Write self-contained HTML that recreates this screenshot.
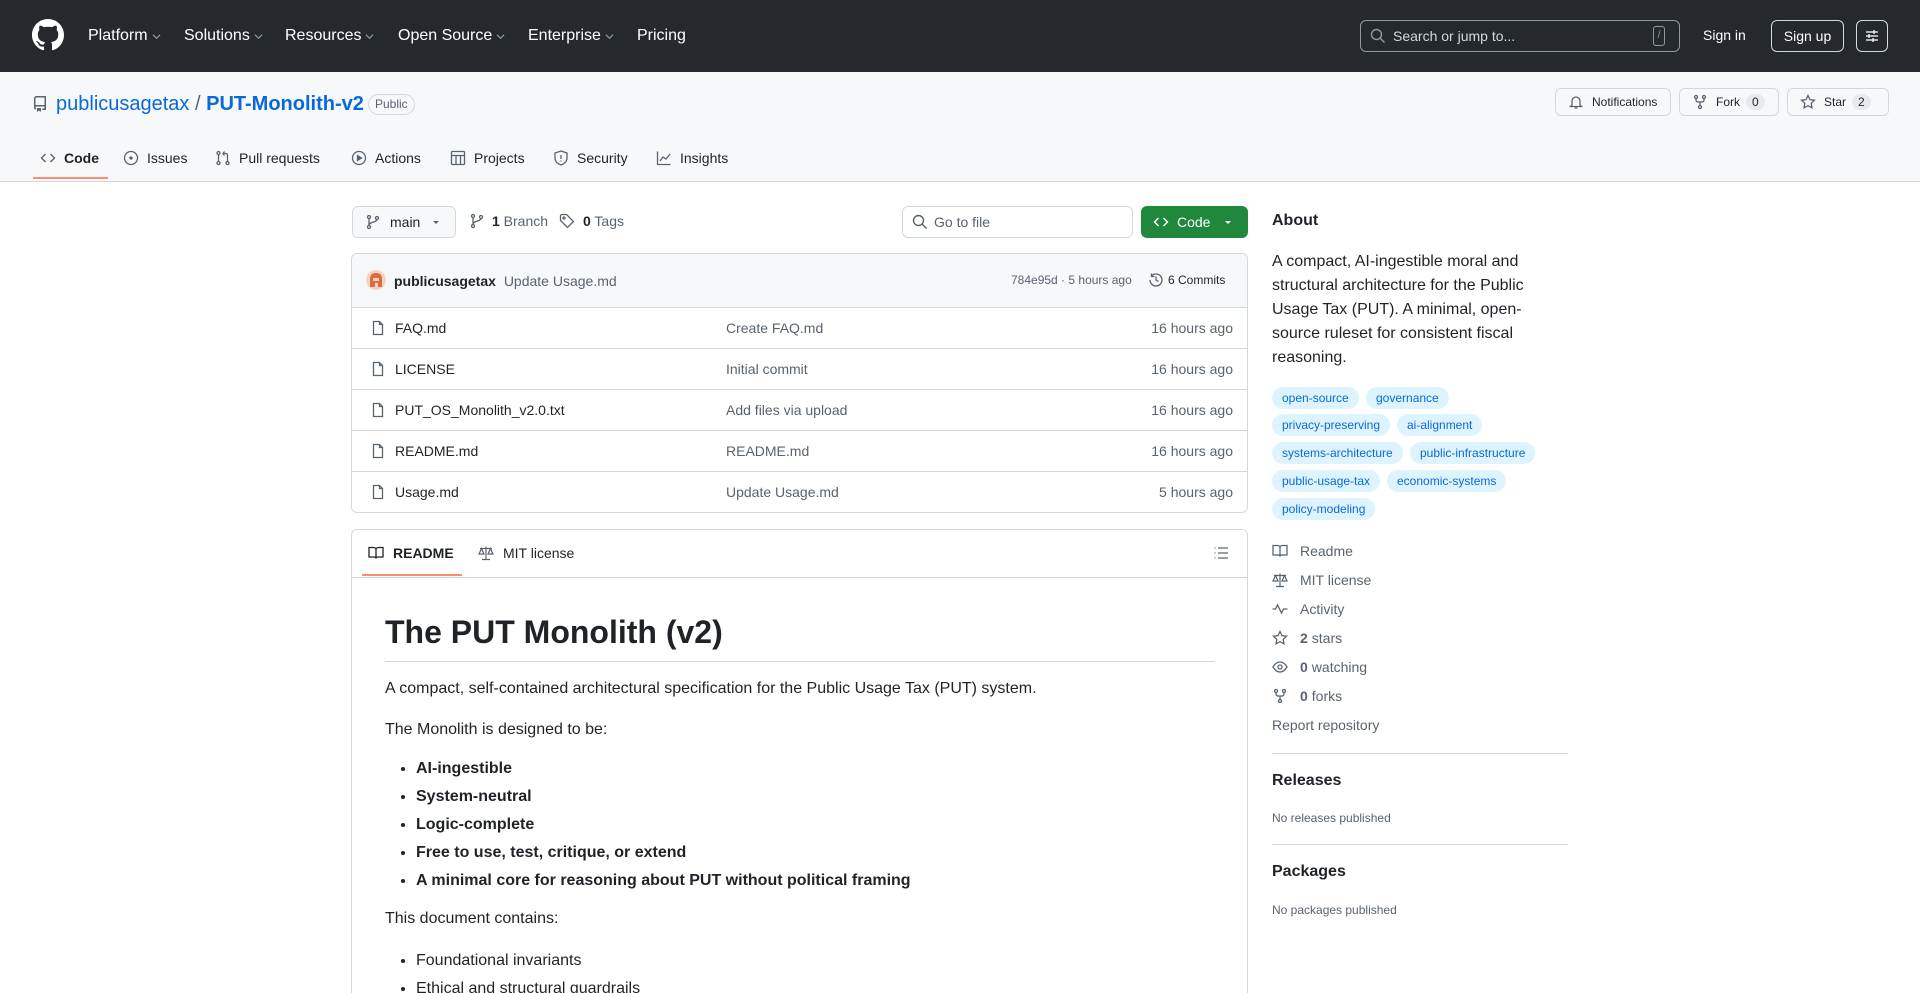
<!DOCTYPE html>
<html style="overflow:hidden;height:993px"><head><meta charset="utf-8">
<style>
*{box-sizing:border-box;margin:0;padding:0}
body{width:1920px;height:993px;overflow:hidden;font-family:"Liberation Sans",Arial,sans-serif;color:#1f2328;background:#fff;position:relative;font-size:14px}
#wrap{position:absolute;left:0;top:0;width:1920px;height:993px;overflow:hidden}
.abs{position:absolute}
svg{display:block}
.hdr{position:absolute;left:0;top:0;width:1920px;height:72px;background:#25292e}
.nav{position:absolute;top:27px;color:#fff;font-size:16px;display:flex;align-items:center;gap:4px}
.nav .ch{width:9px;height:9px;}
.repohdr{position:absolute;left:0;top:72px;width:1920px;height:110px;background:#f6f8fa;border-bottom:1px solid #d1d9e0}
.btn{position:absolute;border:1px solid #d1d9e0;border-radius:6px;background:#f6f8fa;display:flex;align-items:center;font-size:12px;color:#1f2328}
.cnt{display:inline-block;background:#e6eaef;border-radius:10px;padding:1px 6px;font-size:12px;margin-left:6px}
.tab{position:absolute;top:150px;font-size:14px;display:flex;align-items:center;gap:8px;color:#1f2328}
.tab svg{stroke:#59636e}
.row{position:absolute;left:352px;width:895px;height:41px;border-top:1px solid #d1d9e0;font-size:14px}
.row .n{position:absolute;left:43px;top:12px}
.row .m{position:absolute;left:374px;top:12px;color:#59636e}
.row .t{position:absolute;right:14px;top:12px;color:#59636e}
.row svg{position:absolute;left:18px;top:12px}
.topic{position:absolute;height:22px;border-radius:11px;background:#ddf4ff;color:#0969da;font-size:12px;line-height:22px;padding:0 10px}
.sl{position:absolute;left:1272px;font-size:14px;color:#59636e;display:flex;align-items:center}
.sl svg{margin-right:12px}
.sl b{color:#59636e;margin-right:4px}
ul{position:absolute;left:64px;font-size:16px}
li{height:28px;line-height:24px}
#rm{position:absolute;left:351px;top:529px;width:897px;height:464px;border:1px solid #d1d9e0;border-bottom:none;border-radius:6px 6px 0 0;overflow:hidden}
#rm .abs{position:absolute}
</style></head><body><div id="wrap">
<div class="hdr"></div>
<svg class="abs" style="left:32px;top:19px" width="32" height="32" viewBox="0 0 16 16" fill="#fff"><path d="M8 0C3.580 0 0 3.58 0 8c0 3.54 2.29 6.53 5.47 7.59.4.07.55-.17.55-.38 0-.19-.01-.82-.01-1.49-2.01.37-2.53-.49-2.690-.94-.09-.23-.48-.94-.82-1.13-.28-.15-.68-.52-.01-.53.63-.01 1.08.58 1.23.82.72 1.21 1.87.87 2.33.66.07-.52.28-.87.51-1.07-1.780-.2-3.64-.89-3.64-3.950 0-.87.31-1.59.82-2.15-.08-.2-.36-1.02.08-2.12 0 0 .67-.21 2.2.82.64-.18 1.32-.27 2-.27.68 0 1.36.09 2 .27 1.53-1.04 2.2-.82 2.2-.82.44 1.1.16 1.92.08 2.12.51.56.82 1.27.82 2.15 0 3.07-1.87 3.75-3.65 3.95.29.25.54.73.54 1.48 0 1.07-.01 1.93-.01 2.2 0 .21.15.46.55.38A8.013 8.013 0 0016 8c0-4.42-3.58-8-8-8z"/></svg>
<div class="nav" style="left:88px">Platform <svg class="ch" viewBox="0 0 10 10"><path d="M1 3l4 4 4-4" stroke="#9198a1" fill="none" stroke-width="1.3"/></svg></div>
<div class="nav" style="left:184px">Solutions <svg class="ch" viewBox="0 0 10 10"><path d="M1 3l4 4 4-4" stroke="#9198a1" fill="none" stroke-width="1.3"/></svg></div>
<div class="nav" style="left:285px">Resources <svg class="ch" viewBox="0 0 10 10"><path d="M1 3l4 4 4-4" stroke="#9198a1" fill="none" stroke-width="1.3"/></svg></div>
<div class="nav" style="left:398px">Open Source <svg class="ch" viewBox="0 0 10 10"><path d="M1 3l4 4 4-4" stroke="#9198a1" fill="none" stroke-width="1.3"/></svg></div>
<div class="nav" style="left:528px">Enterprise <svg class="ch" viewBox="0 0 10 10"><path d="M1 3l4 4 4-4" stroke="#9198a1" fill="none" stroke-width="1.3"/></svg></div>
<div class="nav" style="left:637px">Pricing</div>
<div class="abs" style="left:1360px;top:20px;width:320px;height:32px;border:1px solid #9198a1;border-radius:6px"></div>
<svg class="abs" style="left:1370px;top:28px" width="16" height="16" viewBox="0 0 16 16"><circle cx="6.5" cy="6.5" r="5" stroke="#9198a1" stroke-width="1.4" fill="none"/><path d="M10.3 10.3L14.5 14.5" stroke="#9198a1" stroke-width="1.4"/></svg>
<div class="abs" style="left:1393px;top:28px;color:#d1d9e0;font-size:14px">Search or jump to...</div>
<div class="abs" style="left:1653px;top:26px;width:12px;height:20px;border:1px solid #9198a1;border-radius:3px;color:#9198a1;font-size:10px;text-align:center;line-height:18px">/</div>
<div class="abs" style="left:1703px;top:27px;color:#fff;font-size:14px">Sign in</div>
<div class="abs" style="left:1771px;top:20px;width:73px;height:32px;border:1px solid #d1d9e0;border-radius:6px;color:#fff;font-size:14px;text-align:center;line-height:30px">Sign up</div>
<div class="abs" style="left:1856px;top:20px;width:32px;height:32px;border:1px solid #d1d9e0;border-radius:6px"></div>
<svg class="abs" style="left:1864px;top:28px" width="16" height="16" viewBox="0 0 16 16" stroke="#fff" stroke-width="1.3"><path d="M2 4h12M2 8h12M2 12h12"/><path d="M10 2v4M5 6v4M9 10v4"/></svg>

<div class="repohdr"></div>
<svg class="abs" style="left:32px;top:96px" width="16" height="16" viewBox="0 0 16 16" fill="#59636e"><path d="M2 2.5A2.5 2.5 0 014.5 0h8.75a.75.75 0 01.75.75v12.5a.75.75 0 01-.75.75h-2.5a.75.75 0 010-1.5h1.75v-2h-8a1 1 0 00-.714 1.7.75.75 0 11-1.072 1.05A2.495 2.495 0 012 11.5zm10.5-1h-8a1 1 0 00-1 1v6.708A2.486 2.486 0 014.5 9h8zM5 12.25a.25.25 0 01.25-.25h3.5a.25.25 0 01.25.25v3.25a.25.25 0 01-.4.2l-1.45-1.087a.249.249 0 00-.3 0L5.4 15.7a.25.25 0 01-.4-.2z"/></svg>
<div class="abs" style="left:56px;top:93px;font-size:20px;color:#0969da">publicusagetax <span style="color:#59636e">/</span> <b>PUT-Monolith-v2</b></div>
<div class="abs" style="left:368px;top:94px;height:21px;border:1px solid #d1d9e0;border-radius:11px;font-size:12px;color:#59636e;padding:0 6px;line-height:19px">Public</div>
<div class="btn" style="left:1555px;top:88px;width:116px;height:28px;padding-left:12px"><svg width="16" height="16" viewBox="0 0 16 16" fill="none" stroke="#59636e" stroke-width="1.3"><path d="M4 11V7a4 4 0 018 0v4l1.5 1.5h-11zM6.5 14h3"/></svg><span style="margin-left:8px">Notifications</span></div>
<div class="btn" style="left:1679px;top:88px;width:100px;height:28px;padding-left:12px"><svg width="16" height="16" viewBox="0 0 16 16" fill="none" stroke="#59636e" stroke-width="1.3"><circle cx="4" cy="3" r="1.5"/><circle cx="12" cy="3" r="1.5"/><circle cx="8" cy="13" r="1.5"/><path d="M4 4.5v1.5c0 1 1 2 2 2h4c1 0 2-1 2-2V4.5M8 8v3.5"/></svg><span style="margin-left:8px">Fork</span><span class="cnt">0</span></div>
<div class="btn" style="left:1787px;top:88px;width:102px;height:28px;padding-left:12px"><svg width="16" height="16" viewBox="0 0 16 16" fill="none" stroke="#59636e" stroke-width="1.3"><path d="M8 1.5l2 4.1 4.5.6-3.3 3.1.8 4.5L8 11.7l-4 2.1.8-4.5L1.5 6.2 6 5.6z"/></svg><span style="margin-left:8px">Star</span><span class="cnt">2</span></div>

<div class="tab" style="left:40px"><svg width="16" height="16" viewBox="0 0 16 16" fill="none" stroke-width="1.4"><path d="M5.5 4L1.5 8l4 4M10.5 4l4 4-4 4"/></svg><b>Code</b></div>
<div class="abs" style="left:33px;top:177px;width:75px;height:2px;background:#fd8c73"></div>
<div class="tab" style="left:123px"><svg width="16" height="16" viewBox="0 0 16 16" fill="none" stroke-width="1.3"><circle cx="8" cy="8" r="6.5"/><circle cx="8" cy="8" r="1" fill="#59636e"/></svg>Issues</div>
<div class="tab" style="left:215px"><svg width="16" height="16" viewBox="0 0 16 16" fill="none" stroke-width="1.3"><circle cx="3.5" cy="3" r="1.5"/><circle cx="3.5" cy="13" r="1.5"/><circle cx="12.5" cy="13" r="1.5"/><path d="M3.5 4.5v7M12.5 11.5V5.5c0-1-.5-2-2-2H8M9.5 1.5L8 3.5l1.5 2"/></svg>Pull requests</div>
<div class="tab" style="left:351px"><svg width="16" height="16" viewBox="0 0 16 16" fill="none" stroke-width="1.3"><circle cx="8" cy="8" r="6.5"/><path d="M6.5 5.5v5l4-2.5z" fill="#59636e"/></svg>Actions</div>
<div class="tab" style="left:450px"><svg width="16" height="16" viewBox="0 0 16 16" fill="none" stroke-width="1.3"><rect x="1.5" y="1.5" width="13" height="13" rx="1"/><path d="M1.5 5.5h13M6 5.5v9M10.5 5.5v9"/></svg>Projects</div>
<div class="tab" style="left:553px"><svg width="16" height="16" viewBox="0 0 16 16" fill="none" stroke-width="1.3"><path d="M8 1l6 2v5c0 3.5-3 6-6 7-3-1-6-3.5-6-7V3z"/><path d="M8 5v4M8 10.5v1"/></svg>Security</div>
<div class="tab" style="left:656px"><svg width="16" height="16" viewBox="0 0 16 16" fill="none" stroke-width="1.3"><path d="M1.5 1.5v13h13M4 11l3-4 3 2 4-5"/></svg>Insights</div>

<!-- branch row -->
<div class="btn" style="left:352px;top:206px;width:104px;height:32px;padding-left:12px;font-size:14px"><svg width="16" height="16" viewBox="0 0 16 16" fill="none" stroke="#59636e" stroke-width="1.3"><circle cx="4" cy="3" r="1.5"/><circle cx="4" cy="13" r="1.5"/><circle cx="12" cy="4" r="1.5"/><path d="M4 4.5v7M12 5.5c0 3-8 2-8 6"/></svg><span style="margin-left:9px">main</span><svg style="margin-left:12px" width="8" height="8" viewBox="0 0 8 8"><path d="M1 3h6L4 6z" fill="#59636e"/></svg></div>
<svg class="abs" style="left:469px;top:213px" width="16" height="16" viewBox="0 0 16 16" fill="none" stroke="#59636e" stroke-width="1.3"><circle cx="4" cy="3" r="1.5"/><circle cx="4" cy="13" r="1.5"/><circle cx="12" cy="4" r="1.5"/><path d="M4 4.5v7M12 5.5c0 3-8 2-8 6"/></svg>
<div class="abs" style="left:492px;top:213px;font-size:14px;color:#59636e"><b style="color:#1f2328">1</b> Branch</div>
<svg class="abs" style="left:559px;top:213px" width="16" height="16" viewBox="0 0 16 16" fill="none" stroke="#59636e" stroke-width="1.3"><path d="M1.5 2.5v5l7 7 6-6-7-7h-5z"/><circle cx="5" cy="5" r="1"/></svg>
<div class="abs" style="left:583px;top:213px;font-size:14px;color:#59636e"><b style="color:#1f2328">0</b> Tags</div>
<div class="abs" style="left:902px;top:206px;width:231px;height:32px;border:1px solid #d1d9e0;border-radius:6px"></div>
<svg class="abs" style="left:912px;top:214px" width="16" height="16" viewBox="0 0 16 16"><circle cx="6.5" cy="6.5" r="5" stroke="#59636e" stroke-width="1.4" fill="none"/><path d="M10.3 10.3L14.5 14.5" stroke="#59636e" stroke-width="1.4"/></svg>
<div class="abs" style="left:934px;top:214px;font-size:14px;color:#59636e">Go to file</div>
<div class="abs" style="left:1141px;top:206px;width:107px;height:32px;background:#1f883d;border-radius:6px;color:#fff;font-size:14px;display:flex;align-items:center;padding-left:12px"><svg width="16" height="16" viewBox="0 0 16 16" fill="none" stroke="#fff" stroke-width="1.4"><path d="M5.5 4L1.5 8l4 4M10.5 4l4 4-4 4"/></svg><span style="margin-left:8px">Code</span><svg style="margin-left:14px" width="8" height="8" viewBox="0 0 8 8"><path d="M1 3h6L4 6z" fill="#fff"/></svg></div>

<!-- files box -->
<div class="abs" style="left:351px;top:253px;width:897px;height:260px;border:1px solid #d1d9e0;border-radius:6px"></div>
<div class="abs" style="left:352px;top:254px;width:895px;height:53px;background:#f6f8fa;border-radius:6px 6px 0 0"></div>
<div class="abs" style="left:366px;top:270px;width:20px;height:20px;border-radius:50%;background:#f3d5c8;overflow:hidden"><div style="position:absolute;left:4px;top:3px;width:12px;height:14px;background:#e26a3b;border-radius:5px 5px 0 0"></div><div style="position:absolute;left:7px;top:8px;width:6px;height:3px;background:#f3d5c8"></div><div style="position:absolute;left:8.5px;top:13px;width:3px;height:4px;background:#f3d5c8"></div></div>
<div class="abs" style="left:394px;top:273px;font-size:14px"><b>publicusagetax</b> <span style="color:#59636e;margin-left:4px">Update Usage.md</span></div>
<div class="abs" style="left:1011px;top:273px;font-size:12px;color:#59636e">784e95d · 5 hours ago</div>
<svg class="abs" style="left:1148px;top:272px" width="16" height="16" viewBox="0 0 16 16" fill="none" stroke="#59636e" stroke-width="1.3"><path d="M2 8a6 6 0 106-6 6 6 0 00-4.5 2M3.5 1.5V4.5H6.5M8 4.5V8l2.5 1.5"/></svg>
<div class="abs" style="left:1168px;top:273px;font-size:12px;color:#1f2328">6 Commits</div>

<div class="row" style="top:307px"><svg width="16" height="16" viewBox="0 0 16 16" fill="none" stroke="#59636e" stroke-width="1.3"><path d="M3.5 1.5h6l3 3v10h-9z M9.5 1.5v3h3"/></svg><span class="n">FAQ.md</span><span class="m">Create FAQ.md</span><span class="t">16 hours ago</span></div>
<div class="row" style="top:348px"><svg width="16" height="16" viewBox="0 0 16 16" fill="none" stroke="#59636e" stroke-width="1.3"><path d="M3.5 1.5h6l3 3v10h-9z M9.5 1.5v3h3"/></svg><span class="n">LICENSE</span><span class="m">Initial commit</span><span class="t">16 hours ago</span></div>
<div class="row" style="top:389px"><svg width="16" height="16" viewBox="0 0 16 16" fill="none" stroke="#59636e" stroke-width="1.3"><path d="M3.5 1.5h6l3 3v10h-9z M9.5 1.5v3h3"/></svg><span class="n">PUT_OS_Monolith_v2.0.txt</span><span class="m">Add files via upload</span><span class="t">16 hours ago</span></div>
<div class="row" style="top:430px"><svg width="16" height="16" viewBox="0 0 16 16" fill="none" stroke="#59636e" stroke-width="1.3"><path d="M3.5 1.5h6l3 3v10h-9z M9.5 1.5v3h3"/></svg><span class="n">README.md</span><span class="m">README.md</span><span class="t">16 hours ago</span></div>
<div class="row" style="top:471px"><svg width="16" height="16" viewBox="0 0 16 16" fill="none" stroke="#59636e" stroke-width="1.3"><path d="M3.5 1.5h6l3 3v10h-9z M9.5 1.5v3h3"/></svg><span class="n">Usage.md</span><span class="m">Update Usage.md</span><span class="t">5 hours ago</span></div>

<div id="rm">
<div class="abs" style="left:0;top:47px;width:895px;height:1px;background:#d1d9e0"></div>
<div class="abs" style="left:10px;top:44px;width:100px;height:2px;background:#fd8c73"></div>
<svg class="abs" style="left:16px;top:15px" width="16" height="16" viewBox="0 0 16 16" fill="none" stroke="#1f2328" stroke-width="1.3"><path d="M1 2.5h4.5c1.5 0 2.5 1 2.5 2v9c0-1-1-1.5-2-1.5H1zM15 2.5h-4.5C9 2.5 8 3.5 8 4.5v9c0-1 1-1.5 2-1.5h5z"/></svg>
<div class="abs" style="left:41px;top:15px;font-size:14px;font-weight:bold">README</div>
<svg class="abs" style="left:126px;top:15px" width="16" height="16" viewBox="0 0 16 16" fill="none" stroke="#59636e" stroke-width="1.2"><path d="M8 1.5v13M4 14.5h8M2 3.5h12M3.5 3.5L1 9h5zM12.5 3.5L10 9h5z"/></svg>
<div class="abs" style="left:151px;top:15px;font-size:14px">MIT license</div>
<svg class="abs" style="left:861px;top:15px" width="16" height="16" viewBox="0 0 16 16" fill="none" stroke="#59636e" stroke-width="1.3"><path d="M5 3h10M5 8h10M5 13h10M1.5 3h1M1.5 8h1M1.5 13h1"/></svg>
<div class="abs" style="left:33px;top:84px;font-size:32px;font-weight:bold">The PUT Monolith (v2)</div>
<div class="abs" style="left:33px;top:131px;width:830px;height:1px;background:#d1d9e0"></div>
<div class="abs" style="left:33px;top:150px;font-size:16px">A compact, self-contained architectural specification for the Public Usage Tax (PUT) system.</div>
<div class="abs" style="left:33px;top:191px;font-size:16px">The Monolith is designed to be:</div>
<ul style="top:227px;font-weight:bold"><li>AI-ingestible</li><li>System-neutral</li><li>Logic-complete</li><li>Free to use, test, critique, or extend</li><li>A minimal core for reasoning about PUT without political framing</li></ul>
<div class="abs" style="left:33px;top:380px;font-size:16px">This document contains:</div>
<ul style="top:419px"><li>Foundational invariants</li><li>Ethical and structural guardrails</li></ul>
</div>

<div class="abs" style="left:1272px;top:212px;font-size:16px;font-weight:bold">About</div>
<div class="abs" style="left:1272px;top:250px;width:288px;font-size:16px;line-height:24px">A compact, AI-ingestible moral and structural architecture for the Public Usage Tax (PUT). A minimal, open-source ruleset for consistent fiscal reasoning.</div>
<div class="topic" style="left:1272px;top:387px">open-source</div>
<div class="topic" style="left:1366px;top:387px">governance</div>
<div class="topic" style="left:1272px;top:414px">privacy-preserving</div>
<div class="topic" style="left:1397px;top:414px">ai-alignment</div>
<div class="topic" style="left:1272px;top:442px">systems-architecture</div>
<div class="topic" style="left:1410px;top:442px">public-infrastructure</div>
<div class="topic" style="left:1272px;top:470px">public-usage-tax</div>
<div class="topic" style="left:1387px;top:470px">economic-systems</div>
<div class="topic" style="left:1272px;top:498px">policy-modeling</div>

<div class="sl" style="top:543px"><svg width="16" height="16" viewBox="0 0 16 16" fill="none" stroke="#59636e" stroke-width="1.3"><path d="M1 2.5h4.5c1.5 0 2.5 1 2.5 2v9c0-1-1-1.5-2-1.5H1zM15 2.5h-4.5C9 2.5 8 3.5 8 4.5v9c0-1 1-1.5 2-1.5h5z"/></svg>Readme</div>
<div class="sl" style="top:572px"><svg width="16" height="16" viewBox="0 0 16 16" fill="none" stroke="#59636e" stroke-width="1.2"><path d="M8 1.5v13M4 14.5h8M2 3.5h12M3.5 3.5L1 9h5zM12.5 3.5L10 9h5z"/></svg>MIT license</div>
<div class="sl" style="top:601px"><svg width="16" height="16" viewBox="0 0 16 16" fill="none" stroke="#59636e" stroke-width="1.3"><path d="M0.5 8h3l2-4 4 8 2-4h4"/></svg>Activity</div>
<div class="sl" style="top:630px"><svg width="16" height="16" viewBox="0 0 16 16" fill="none" stroke="#59636e" stroke-width="1.3"><path d="M8 1.5l2 4.1 4.5.6-3.3 3.1.8 4.5L8 11.7l-4 2.1.8-4.5L1.5 6.2 6 5.6z"/></svg><b>2</b> stars</div>
<div class="sl" style="top:659px"><svg width="16" height="16" viewBox="0 0 16 16" fill="none" stroke="#59636e" stroke-width="1.3"><path d="M1 8c2-3.5 4.5-5 7-5s5 1.5 7 5c-2 3.5-4.5 5-7 5S3 11.5 1 8z"/><circle cx="8" cy="8" r="2"/></svg><b>0</b> watching</div>
<div class="sl" style="top:688px"><svg width="16" height="16" viewBox="0 0 16 16" fill="none" stroke="#59636e" stroke-width="1.3"><circle cx="4" cy="3" r="1.5"/><circle cx="12" cy="3" r="1.5"/><circle cx="8" cy="13" r="1.5"/><path d="M4 4.5v1.5c0 1 1 2 2 2h4c1 0 2-1 2-2V4.5M8 8v3.5"/></svg><b>0</b> forks</div>
<div class="sl" style="top:717px">Report repository</div>
<div class="abs" style="left:1272px;top:753px;width:296px;height:1px;background:#d1d9e0"></div>
<div class="abs" style="left:1272px;top:772px;font-size:16px;font-weight:bold">Releases</div>
<div class="abs" style="left:1272px;top:811px;font-size:12px;color:#59636e">No releases published</div>
<div class="abs" style="left:1272px;top:844px;width:296px;height:1px;background:#d1d9e0"></div>
<div class="abs" style="left:1272px;top:863px;font-size:16px;font-weight:bold">Packages</div>
<div class="abs" style="left:1272px;top:903px;font-size:12px;color:#59636e">No packages published</div>
</div></body></html>
